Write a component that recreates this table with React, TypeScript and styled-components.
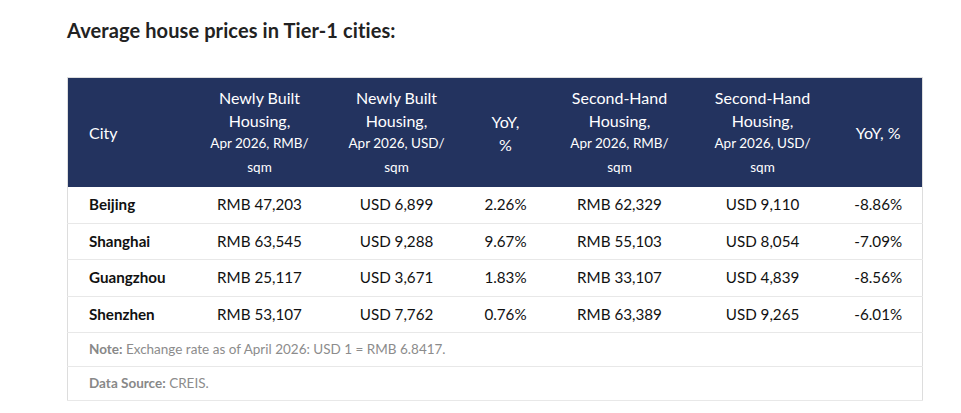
import React from "react";
import styled, { createGlobalStyle } from "styled-components";

const Global = createGlobalStyle`
  html, body { margin: 0; padding: 0; background: #ffffff; }
  body { font-family: Lato, "Noto Sans", Arial, sans-serif; color: #1a1a1a; }
`;

const Page = styled.div`
  padding: 16px 0 0 67px;
  width: 855px;
`;

const Title = styled.h2`
  margin: 0 0 33px 0;
  font-size: 20px;
  line-height: 28px;
  font-weight: 700;
  color: #222222;
  letter-spacing: 0.1px;
`;

const Table = styled.table`
  width: 855px;
  border-collapse: collapse;
  table-layout: fixed;
  border: 1px solid #dddddd;
`;

const HeadCell = styled.th<{ $align?: "left" | "center" }>`
  background: #23335f;
  color: #ffffff;
  font-weight: 400;
  font-size: 16px;
  line-height: 23px;
  padding: 8px 6px 8px ${(p) => (p.$align === "left" ? "21px" : "6px")};
  text-align: ${(p) => p.$align ?? "center"};
  vertical-align: middle;
`;

const Small = styled.span`
  display: block;
  font-size: 13.5px;
  line-height: 23.5px;
`;

const Row = styled.tr`
  border-bottom: 1px solid #e8e8e8;
`;

const Cell = styled.td<{ $city?: boolean }>`
  font-size: 15.2px;
  line-height: 23.5px;
  padding: 6px 6px 6px ${(p) => (p.$city ? "21px" : "6px")};
  text-align: ${(p) => (p.$city ? "left" : "center")};
  font-weight: ${(p) => (p.$city ? 700 : 400)};
  color: #111111;
`;

const FootCell = styled.td`
  font-size: 13.5px;
  line-height: 21px;
  padding: 6px 6px 6px 21px;
  color: #8c8c8c;
  text-align: left;
`;

const Label = styled.b`
  font-weight: 700;
  color: #888888;
`;

const widths = [121, 142, 132, 86, 142, 144, 88];

const rows = [
  ["Beijing", "RMB 47,203", "USD 6,899", "2.26%", "RMB 62,329", "USD 9,110", "-8.86%"],
  ["Shanghai", "RMB 63,545", "USD 9,288", "9.67%", "RMB 55,103", "USD 8,054", "-7.09%"],
  ["Guangzhou", "RMB 25,117", "USD 3,671", "1.83%", "RMB 33,107", "USD 4,839", "-8.56%"],
  ["Shenzhen", "RMB 53,107", "USD 7,762", "0.76%", "RMB 63,389", "USD 9,265", "-6.01%"],
];

function Head({ top, unit }: { top: string; unit: string }) {
  return (
    <>
      {top}
      <br />
      Housing,
      <Small>
        Apr 2026, {unit}/
        <br />
        sqm
      </Small>
    </>
  );
}

export default function App() {
  return (
    <>
      <Global />
      <Page>
        <Title>Average house prices in Tier-1 cities:</Title>
        <Table>
          <colgroup>
            {widths.map((w, i) => (
              <col key={i} style={{ width: w }} />
            ))}
          </colgroup>
          <thead>
            <tr>
              <HeadCell $align="left">City</HeadCell>
              <HeadCell>
                <Head top="Newly Built" unit="RMB" />
              </HeadCell>
              <HeadCell>
                <Head top="Newly Built" unit="USD" />
              </HeadCell>
              <HeadCell>
                YoY,
                <br />%
              </HeadCell>
              <HeadCell>
                <Head top="Second-Hand" unit="RMB" />
              </HeadCell>
              <HeadCell>
                <Head top="Second-Hand" unit="USD" />
              </HeadCell>
              <HeadCell>YoY, %</HeadCell>
            </tr>
          </thead>
          <tbody>
            {rows.map((r) => (
              <Row key={r[0]}>
                {r.map((c, i) => (
                  <Cell key={i} $city={i === 0}>
                    {c}
                  </Cell>
                ))}
              </Row>
            ))}
            <Row>
              <FootCell colSpan={7}>
                <Label>Note:</Label> Exchange rate as of April 2026: USD 1 = RMB 6.8417.
              </FootCell>
            </Row>
            <Row>
              <FootCell colSpan={7}>
                <Label>Data Source:</Label> CREIS.
              </FootCell>
            </Row>
          </tbody>
        </Table>
      </Page>
    </>
  );
}
